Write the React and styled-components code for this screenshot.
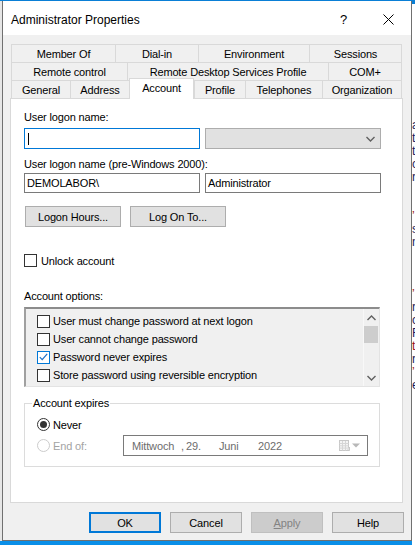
import React from 'react';
import styled, { createGlobalStyle } from 'styled-components';

const GlobalStyle = createGlobalStyle`
  html, body { margin: 0; padding: 0; }
  body {
    font-family: "Liberation Sans", Arial, sans-serif;
    font-size: 11px;
    letter-spacing: -0.15px;
    color: #000;
    background: #fff;
  }
  * { box-sizing: border-box; }
`;

const Screen = styled.div`
  width: 415px;
  height: 545px;
  display: flex;
  flex-direction: column;
  overflow: hidden;
  background: #fff;
`;
const AccentLine = styled.div`
  height: 1px;
  background: #0a7fd6;
`;
const Desktop = styled.div`
  flex: 1;
  display: flex;
  min-height: 0;
`;
const LeftSide = styled.div`
  width: 412px;
  display: flex;
  flex-direction: column;
`;
const WindowRow = styled.div`
  flex: 1;
  display: flex;
  min-height: 0;
`;
const Gutter = styled.div`
  width: 2px;
  background: #e6e6e6;
`;
const Taskbar = styled.div`
  height: 4px;
  background: #0a8fe8;
`;
const Peek = styled.div`
  flex: 1;
  overflow: hidden;
  padding-top: 118px;
  display: flex;
  flex-direction: column;
  line-height: 13px;
  font-size: 12px;
`;
const PeekCap = styled.div`
  height: 3px;
  margin-top: -118px;
  margin-bottom: 115px;
  background: #0a7fd6;
`;
const PeekGlyph = styled.span`
  height: 13px;
  color: ${p => p.$red ? '#9a1010' : '#1c1c5c'};
`;

const Dialog = styled.div`
  flex: 1;
  display: flex;
  flex-direction: column;
  border: 1px solid #707070;
  border-top: none;
  background: #f0f0f0;
`;
const TitleBar = styled.div`
  height: 34px;
  background: #fff;
  display: flex;
  align-items: center;
  padding: 3px 0 0 8px;
`;
const TitleText = styled.div`
  flex: 1;
  font-size: 12px;
  letter-spacing: 0;
`;
const TitleButton = styled.div`
  width: 45px;
  height: 100%;
  display: flex;
  align-items: center;
  justify-content: center;
  font-size: 13px;
`;

const Body = styled.div`
  flex: 1;
  padding: 9px 8px 0 7px;
  display: flex;
  flex-direction: column;
`;
const TabStrip = styled.div`
  margin: 0 1px;
  display: flex;
  flex-direction: column;
`;
const TabRow = styled.div`
  height: 18px;
  display: flex;
  align-items: flex-start;
`;
const Tab = styled.div`
  width: ${p => p.$w}px;
  height: ${p => (p.$active ? 21 : 18)}px;
  margin-top: ${p => (p.$active ? -2 : 0)}px;
  margin-bottom: ${p => (p.$active ? -1 : 0)}px;
  padding-bottom: ${p => (p.$active ? 3 : 0)}px;
  display: flex;
  align-items: center;
  justify-content: center;
  white-space: nowrap;
  background: ${p => (p.$active ? '#fff' : '#f0f0f0')};
  border: 1px solid #d9d9d9;
  border-bottom: none;
  border-right: ${p => (p.$active || p.$last ? '1px solid #d9d9d9' : 'none')};
  position: relative;
  z-index: ${p => (p.$active ? 1 : 0)};
`;

const Panel = styled.div`
  height: 405px;
  background: #fff;
  border: 1px solid #d9d9d9;
  padding: 0 21px 0 13px;
  display: flex;
  flex-direction: column;
`;
const FieldLabel = styled.div`
  line-height: 14px;
  margin-top: ${p => p.$top}px;
`;
const FieldRow = styled.div`
  display: flex;
  gap: 5px;
  margin-top: ${p => p.$top}px;
`;
const TextBox = styled.div`
  width: 176px;
  height: ${p => p.$h}px;
  background: #fff;
  border: 1px solid ${p => (p.$focused ? '#0078d7' : '#7a7a7a')};
  display: flex;
  align-items: center;
  padding-left: 2px;
  white-space: nowrap;
`;
const Caret = styled.span`
  width: 1px;
  height: 12px;
  margin-left: 1px;
  background: #000;
`;
const ComboBox = styled.div`
  width: 176px;
  height: 21px;
  background: #e1e1e1;
  border: 1px solid #adadad;
  display: flex;
  align-items: center;
  justify-content: flex-end;
  padding-right: 5px;
`;

const ButtonRow = styled.div`
  display: flex;
  gap: 9px;
  margin: 13px 0 0 1px;
`;
const Button = styled.div`
  width: ${p => p.$w}px;
  height: 21px;
  display: flex;
  align-items: center;
  justify-content: center;
  background: ${p => (p.$disabled ? '#cccccc' : '#e1e1e1')};
  color: ${p => (p.$disabled ? '#838383' : '#000')};
  border: ${p => (p.$focused ? '2px solid #0078d7' : `1px solid ${p.$disabled ? '#bfbfbf' : '#adadad'}`)};
`;

const CheckRow = styled.div`
  display: flex;
  align-items: center;
  gap: ${p => p.$gap}px;
  height: ${p => p.$h}px;
  margin-top: ${p => p.$top || 0}px;
  white-space: nowrap;
`;
const CheckBox = styled.span`
  width: 13px;
  height: 13px;
  flex-shrink: 0;
  background: #fff;
  border: 1px solid ${p => (p.$checked ? '#0078d7' : '#333')};
  display: flex;
  align-items: center;
  justify-content: center;
`;

const ListBox = styled.div`
  width: 356px;
  height: 80px;
  margin-top: 4px;
  display: flex;
  background: #f0f0f0;
  border-style: solid;
  border-width: 2px 1px 1px 2px;
  border-color: #8c8c8c #e3e3e3 #e3e3e3 #a0a0a0;
`;
const ListItems = styled.div`
  flex: 1;
  padding: 3px 0 0 11px;
  display: flex;
  flex-direction: column;
`;
const ScrollBar = styled.div`
  width: 16px;
  display: flex;
  flex-direction: column;
  border-left: 1px solid #f8f8f8;
`;
const ScrollArrow = styled.div`
  height: 17px;
  display: flex;
  align-items: center;
  justify-content: center;
`;
const ScrollThumb = styled.div`
  height: 17px;
  margin-right: 1px;
  background: #cdcdcd;
`;
const ScrollTrack = styled.div`
  flex: 1;
`;

const GroupBox = styled.fieldset`
  width: 356px;
  margin: 9px 0 0 0;
  padding: 4px 0 10px 12px;
  border: 1px solid #dcdcdc;
  min-width: 0;
`;
const GroupLegend = styled.legend`
  padding: 0 1px;
  margin-left: -5px;
  line-height: 14px;
`;
const OptionRow = styled.div`
  height: 21px;
  display: flex;
  align-items: center;
`;
const OptionLabel = styled.div`
  width: ${p => (p.$w ? `${p.$w}px` : 'auto')};
  display: flex;
  align-items: center;
  gap: 3px;
  color: ${p => (p.$disabled ? '#a3a3a3' : '#000')};
`;
const Radio = styled.span`
  width: 13px;
  height: 13px;
  border-radius: 50%;
  background: #fff;
  border: 1px solid ${p => (p.$disabled ? '#cccccc' : '#333')};
  display: flex;
  align-items: center;
  justify-content: center;
  &::after {
    content: '';
    display: ${p => (p.$checked ? 'block' : 'none')};
    width: 7px;
    height: 7px;
    border-radius: 50%;
    background: #333;
  }
`;
const DatePicker = styled.div`
  width: 245px;
  height: 21px;
  background: #fff;
  border: 1px solid #7a7a7a;
  display: flex;
  align-items: center;
  padding: 0 7px 0 8px;
  color: #6d6d6d;
  white-space: nowrap;
`;
const DateSegment = styled.span`
  width: ${p => (p.$w ? `${p.$w}px` : 'auto')};
  flex-shrink: 0;
`;
const PickerIcons = styled.div`
  margin-left: auto;
  display: flex;
  align-items: center;
  gap: 2px;
`;

const DialogButtons = styled.div`
  display: flex;
  justify-content: flex-end;
  gap: 9px;
  margin: 9px -1px 0 0;
`;

const tabRows = [
  [['Member Of', 104], ['Dial-in', 83], ['Environment', 111], ['Sessions', 93]],
  [['Remote control', 116], ['Remote Desktop Services Profile', 201], ['COM+', 74]],
  [['General', 59], ['Address', 59], ['Account', 65, true], ['Profile', 51], ['Telephones', 77], ['Organization', 80]],
];

const accountOptions = [
  ['User must change password at next logon', false],
  ['User cannot change password', false],
  ['Password never expires', true],
  ['Store password using reversible encryption', false],
];

const peekGlyphs = [
  ['a'], ['t'], ['t'], ['c'], ['r'], [''], [''], ['\u2019', true], ['s'], ['n'], [''], [''], [''],
  ['\u2019', true], ['r'], ['c'], ['F'], ['t', true], ['r'], ['\u2019', true], ['e'], [''], [''],
];

const Chevron = ({ up }) => (
  <svg width="9" height="6" viewBox="0 0 9 6">
    <polyline
      points={up ? '0.5,5 4.5,1 8.5,5' : '0.5,1 4.5,5 8.5,1'}
      fill="none"
      stroke="#606060"
      strokeWidth="1.4"
    />
  </svg>
);

const CheckMark = () => (
  <svg width="9" height="8" viewBox="0 0 9 8">
    <polyline points="0.8,4.2 3.2,6.6 8.2,0.8" fill="none" stroke="#1a6fc9" strokeWidth="1.2" />
  </svg>
);

const CalendarIcon = () => (
  <svg width="11" height="11" viewBox="0 0 11 11">
    <rect x="0.5" y="0.5" width="9" height="10" fill="#f4f4f4" stroke="#c8c8c8" />
    <path d="M0.5 3.5h9M0.5 5.8h9M0.5 8.1h9M3.5 1v9.5M6.5 1v9.5" stroke="#d6d6d6" strokeWidth="1" />
    <path d="M7 10.5h3.5V7" fill="#e0e0e0" stroke="#c8c8c8" />
  </svg>
);

const SmallArrow = () => (
  <svg width="8" height="5" viewBox="0 0 8 5">
    <polygon points="0,0.5 8,0.5 4,4.5" fill="#b8b8b8" />
  </svg>
);

const CloseIcon = () => (
  <svg width="11" height="11" viewBox="0 0 11 11">
    <path d="M0.5 0.5L10.5 10.5M10.5 0.5L0.5 10.5" stroke="#000" strokeWidth="1" />
  </svg>
);

export default function App() {
  return (
    <Screen>
      <GlobalStyle />
      <AccentLine />
      <Desktop>
        <LeftSide>
          <WindowRow>
            <Gutter />
            <Dialog>
              <TitleBar>
                <TitleText>Administrator Properties</TitleText>
                <TitleButton>?</TitleButton>
                <TitleButton>
                  <CloseIcon />
                </TitleButton>
              </TitleBar>
              <Body>
                <TabStrip>
                  {tabRows.map((row, i) => (
                    <TabRow key={i}>
                      {row.map(([label, w, active], j) => (
                        <Tab key={label} $w={w} $active={active} $last={j === row.length - 1}>
                          {label}
                        </Tab>
                      ))}
                    </TabRow>
                  ))}
                </TabStrip>
                <Panel>
                  <FieldLabel $top={11}>User logon name:</FieldLabel>
                  <FieldRow $top={4}>
                    <TextBox $h={21} $focused>
                      <Caret />
                    </TextBox>
                    <ComboBox>
                      <Chevron />
                    </ComboBox>
                  </FieldRow>
                  <FieldLabel $top={8}>User logon name (pre-Windows 2000):</FieldLabel>
                  <FieldRow $top={2}>
                    <TextBox $h={20}>DEMOLABOR\</TextBox>
                    <TextBox $h={20}>Administrator</TextBox>
                  </FieldRow>
                  <ButtonRow>
                    <Button $w={96}>Logon Hours...</Button>
                    <Button $w={96}>Log On To...</Button>
                  </ButtonRow>
                  <CheckRow $gap={4} $h={13} $top={27}>
                    <CheckBox />
                    Unlock account
                  </CheckRow>
                  <FieldLabel $top={22}>Account options:</FieldLabel>
                  <ListBox>
                    <ListItems>
                      {accountOptions.map(([label, checked]) => (
                        <CheckRow key={label} $gap={3} $h={18}>
                          <CheckBox $checked={checked}>{checked && <CheckMark />}</CheckBox>
                          {label}
                        </CheckRow>
                      ))}
                    </ListItems>
                    <ScrollBar>
                      <ScrollArrow>
                        <Chevron up />
                      </ScrollArrow>
                      <ScrollThumb />
                      <ScrollTrack />
                      <ScrollArrow>
                        <Chevron />
                      </ScrollArrow>
                    </ScrollBar>
                  </ListBox>
                  <GroupBox>
                    <GroupLegend>Account expires</GroupLegend>
                    <OptionRow>
                      <OptionLabel>
                        <Radio $checked />
                        Never
                      </OptionLabel>
                    </OptionRow>
                    <OptionRow>
                      <OptionLabel $w={86} $disabled>
                        <Radio $disabled />
                        End of:
                      </OptionLabel>
                      <DatePicker>
                        <DateSegment $w={49}>Mittwoch</DateSegment>
                        <DateSegment $w={5}>,</DateSegment>
                        <DateSegment $w={33}>29.</DateSegment>
                        <DateSegment $w={39}>Juni</DateSegment>
                        <DateSegment>2022</DateSegment>
                        <PickerIcons>
                          <CalendarIcon />
                          <SmallArrow />
                        </PickerIcons>
                      </DatePicker>
                    </OptionRow>
                  </GroupBox>
                </Panel>
                <DialogButtons>
                  <Button $w={72} $focused>OK</Button>
                  <Button $w={72}>Cancel</Button>
                  <Button $w={72} $disabled>
                    <span><u>A</u>pply</span>
                  </Button>
                  <Button $w={72}>Help</Button>
                </DialogButtons>
              </Body>
            </Dialog>
          </WindowRow>
          <Taskbar />
        </LeftSide>
        <Peek>
          <PeekCap />
          {peekGlyphs.map(([ch, red], i) => (
            <PeekGlyph key={i} $red={red}>{ch}</PeekGlyph>
          ))}
        </Peek>
      </Desktop>
    </Screen>
  );
}
